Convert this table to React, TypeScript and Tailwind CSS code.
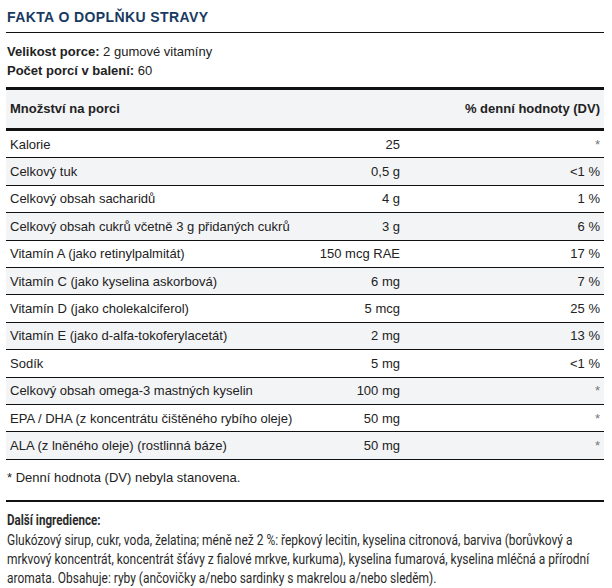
import React from "react";

const rows: [string, string, string][] = [
  ["Kalorie", "25", "*"],
  ["Celkový tuk", "0,5 g", "<1 %"],
  ["Celkový obsah sacharidů", "4 g", "1 %"],
  ["Celkový obsah cukrů včetně 3 g přidaných cukrů", "3 g", "6 %"],
  ["Vitamín A (jako retinylpalmitát)", "150 mcg RAE", "17 %"],
  ["Vitamín C (jako kyselina askorbová)", "6 mg", "7 %"],
  ["Vitamín D (jako cholekalciferol)", "5 mcg", "25 %"],
  ["Vitamín E (jako d-alfa-tokoferylacetát)", "2 mg", "13 %"],
  ["Sodík", "5 mg", "<1 %"],
  ["Celkový obsah omega-3 mastných kyselin", "100 mg", "*"],
  ["EPA / DHA (z koncentrátu čištěného rybího oleje)", "50 mg", "*"],
  ["ALA (z lněného oleje) (rostlinná báze)", "50 mg", "*"],
];

const ingredientLines = [
  "Glukózový sirup, cukr, voda, želatina; méně než 2 %: řepkový lecitin, kyselina citronová, barviva (borůvkový a",
  "mrkvový koncentrát, koncentrát šťávy z fialové mrkve, kurkuma), kyselina fumarová, kyselina mléčná a přírodní",
  "aromata. Obsahuje: ryby (ančovičky a/nebo sardinky s makrelou a/nebo sleděm).",
];

export default function App() {
  return (
    <div className="w-[612px] h-[588px] bg-white overflow-hidden text-[#222]" style={{ fontFamily: '"Liberation Sans", Arial, sans-serif' }}>
      <div className="ml-[6px] w-[598px]">
        <div className="pt-[9px] pb-[7px] pl-[1px] text-[14px] leading-[16px] font-bold tracking-[0.4px] text-[#183a61]">
          FAKTA O DOPLŇKU STRAVY
        </div>
        <div className="h-px bg-[#111]" />
        <div className="pl-[1px] pt-[9px] text-[13px] leading-[19px]">
          <div><span className="font-bold">Velikost porce:</span> 2 gumové vitamíny</div>
          <div><span className="font-bold">Počet porcí v balení:</span> 60</div>
        </div>
        <div className="mt-[7px] h-[3px] bg-[#111]" />
        <div className="flex items-center justify-between bg-[#f3f4f6] h-[38px] pl-[4px] pr-[4px] text-[13px] font-bold">
          <span>Množství na porci</span>
          <span>% denní hodnoty (DV)</span>
        </div>
        <div className="h-[3px] bg-[#111]" />
        {rows.map((r, i) => (
          <div
            key={i}
            className={`grid grid-cols-[1fr_200px] items-center h-[27.4px] border-b border-[#111] text-[13px] leading-[15px] pl-[4px] pr-[4px] ${i % 2 === 1 ? "bg-[#f3f4f6]" : "bg-white"}`}
          >
            <div className="flex items-center justify-between gap-2 whitespace-nowrap">
              <span>{r[0]}</span>
              <span>{r[1]}</span>
            </div>
            <span className={`text-right ${r[2] === "*" ? "text-[#777]" : ""}`}>{r[2]}</span>
          </div>
        ))}
        <div className="pt-[10px] pb-[14px] text-[13px] leading-[16px] pl-[1px]">
          * Denní hodnota (DV) nebyla stanovena.
        </div>
        <div className="h-[2px] bg-[#111]" />
        <div className="pt-[9px] text-[14px] leading-[19px] pl-[1px] text-[#2a2a2a]" style={{ fontFamily: 'Roboto, "Liberation Sans", sans-serif' }}>
          <div className="font-bold whitespace-nowrap origin-left scale-x-[0.83] w-[140px]">Další ingredience:</div>
          <div className="pt-[1px]">
            {ingredientLines.map((l, i) => (
              <div key={i} className="whitespace-nowrap origin-left scale-x-[0.855] w-[690px]">{l}</div>
            ))}
          </div>
        </div>
      </div>
    </div>
  );
}
